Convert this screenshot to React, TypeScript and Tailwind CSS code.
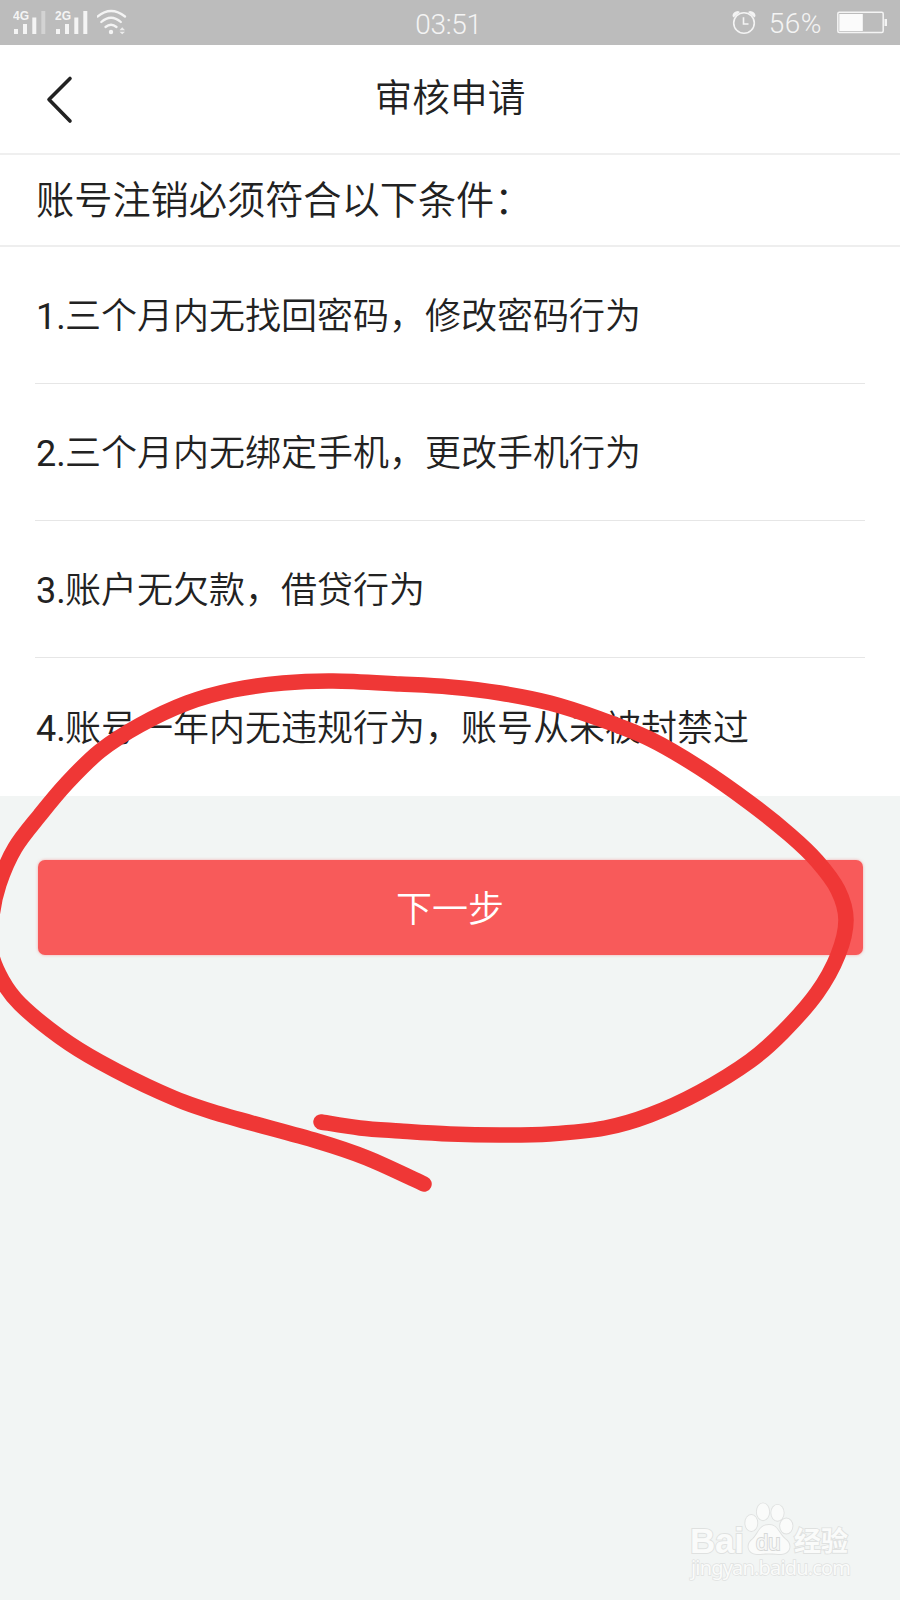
const conditions = [
  { n: "1.", text: "三个月内无找回密码，修改密码行为" },
  { n: "2.", text: "三个月内无绑定手机，更改手机行为" },
  { n: "3.", text: "账户无欠款，借贷行为" },
  { n: "4.", text: "账号一年内无违规行为，账号从未被封禁过" },
];

// Centre line of the hand-drawn marker stroke
const strokePoints: [number, number][] = [
  [321, 1122], [360, 1128], [400, 1131], [450, 1134], [500, 1135], [550, 1134], [605, 1128],
  [650, 1115], [700, 1092], [750, 1061], [783, 1032], [817, 993], [838, 955], [846, 920],
  [838, 890], [817, 861], [790, 835], [750, 803], [700, 768], [650, 739], [600, 719],
  [550, 703], [500, 693], [450, 687], [400, 684], [333, 681], [283, 683], [233, 690],
  [187, 703], [140, 725], [100, 751], [67, 783], [40, 815], [15, 848], [-1, 884],
  [-8, 916], [-9, 952], [2, 980], [20, 1004], [60, 1037], [100, 1062], [160, 1092], [213, 1112],
  [317, 1141], [367, 1158], [424, 1184],
];

function smoothPath(p: [number, number][]) {
  let d = `M${p[0][0]} ${p[0][1]}`;
  for (let i = 0; i < p.length - 1; i++) {
    const a = p[i - 1] ?? p[i];
    const b = p[i];
    const c = p[i + 1];
    const e = p[i + 2] ?? c;
    d += `C${b[0] + (c[0] - a[0]) / 6} ${b[1] + (c[1] - a[1]) / 6} ${c[0] - (e[0] - b[0]) / 6} ${c[1] - (e[1] - b[1]) / 6} ${c[0]} ${c[1]}`;
  }
  return d;
}

function Signal({ label, weak }: { label: string; weak?: boolean }) {
  return (
    <svg width="42" height="45" viewBox="0 0 42 45" fill="#f4f4f4">
      <text x="0" y="20" fontSize="12" fontWeight="700" fontFamily="Liberation Sans, sans-serif">{label}</text>
      <rect x="1" y="29" width="4" height="5" />
      <rect x="10" y="24" width="4" height="10" />
      <rect x="19.3" y="17.5" width="4" height="16.5" />
      <rect x="28.3" y="11" width="4" height="23" opacity={weak ? 0.4 : 1} />
    </svg>
  );
}

function Wifi() {
  return (
    <svg width="34" height="45" viewBox="0 0 34 45" fill="none" stroke="#f4f4f4" strokeWidth="2.3" strokeLinecap="round">
      <path d="M.500 16.500Q14 5.500 28 16.500" />
      <path d="M4.300 22Q14 13.500 23.800 22" />
      <path d="M8.500 27Q14 22.500 19.500 27" />
      <circle cx="14" cy="32" r="2.2" fill="#f4f4f4" stroke="none" />
      <path d="M22.500 30.300L25.200 27.200L28 30.300ZM22.500 31.700L25.200 34.300L28 31.700Z" fill="#ececec" stroke="none" />
    </svg>
  );
}

function AlarmClock() {
  return (
    <svg width="24" height="45" viewBox="0 0 24 45" fill="none" stroke="#f4f4f4" strokeWidth="1.6">
      <circle cx="12" cy="23" r="10.300" />
      <path d="M11.500 17.300V24H16.500" />
      <path d="M.500 16A6 5 0 0 1 6 11L8 12L1.500 17.500ZM23.500 16A6 5 0 0 0 18 11L16 12L22.500 17.500Z" fill="#f4f4f4" stroke="none" />
    </svg>
  );
}

function Battery() {
  return (
    <svg width="52" height="45" viewBox="0 0 52 45">
      <rect x="0.800" y="12.200" width="45.400" height="20.400" rx="1.500" fill="none" stroke="#f4f4f4" strokeWidth="1.5" />
      <rect x="2.300" y="14" width="23.500" height="17" fill="#fbfbfb" />
      <rect x="47.500" y="19" width="2.500" height="7" fill="#f4f4f4" />
    </svg>
  );
}

function Watermark() {
  return (
    <svg className="absolute left-[680px] top-[1495px]" width="180" height="90" viewBox="0 0 180 90" fill="#fafbfa" stroke="#dfe1e0" strokeWidth="1.8" paintOrder="stroke">
      <text x="10" y="57.500" fontSize="35" textLength="54" fontWeight="700" fontFamily="Liberation Sans, sans-serif">Bai</text>
      <ellipse cx="71.300" cy="28" rx="6" ry="8" />
      <ellipse cx="83" cy="16.800" rx="6.200" ry="8.500" />
      <ellipse cx="97.500" cy="17.800" rx="6.200" ry="8" />
      <ellipse cx="106.300" cy="31" rx="6.200" ry="7.500" />
      <path d="M89 30C79 30 79 38 73 44C66 49 67 58 77 59C82 59 84 58.500 89 58.500C94 58.500 97 59 101 59C111 58 112 49 105 44C98 38 98 30 89 30Z" />
      <text x="76" y="54.500" fontSize="22" fontWeight="400" fill="#f6f7f6" stroke="#d6d8d7" fontFamily="Liberation Sans, sans-serif">du</text>
      <text x="114" y="56" fontSize="27" fontWeight="700" fontFamily="Noto Sans CJK SC, sans-serif">经验</text>
      <text x="11" y="79.500" fontSize="20" textLength="160" strokeWidth="1.4" fontFamily="Noto Sans, sans-serif">jingyan.baidu.com</text>
    </svg>
  );
}

export default function App() {
  return (
    <div className="relative h-[1600px] w-[900px] overflow-hidden bg-[#f2f5f4] font-[Roboto,'Noto_Sans_CJK_SC',sans-serif] text-[#222]">
      {/* Status bar */}
      <div className="grid h-[45px] grid-cols-3 items-center bg-[#bcbcbc] text-[28px] font-[350] text-[#f4f4f4]">
        <div className="flex items-center pl-[13px]">
          <Signal label="4G" weak />
          <Signal label="2G" />
          <Wifi />
        </div>
        <div className="pt-[4px] text-center leading-none tracking-[-0.3px]">
          <span className="mr-[3px]">03:51</span>
        </div>
        <div className="flex items-center justify-end pr-[11px]">
          <AlarmClock />
          <span className="mr-[15px] ml-[13px] pt-[2px] leading-none tracking-[0.5px]">56%</span>
          <Battery />
        </div>
      </div>

      {/* Title bar */}
      <header className="grid h-[110px] grid-cols-[100px_1fr_100px] items-center border-b-2 border-[#efefef] bg-white">
        <button className="pl-[45px]" aria-label="返回">
          <svg width="28" height="50" viewBox="0 0 28 50" fill="none" stroke="#222" strokeWidth="3.6" strokeLinecap="round" strokeLinejoin="round">
            <path d="M25 4.500L4 25.500L25 47" />
          </svg>
        </button>
        <h1 className="text-center text-[37.7px] leading-none font-[350]">审核申请</h1>
      </header>

      <h2 className="flex h-[92px] items-center border-b-2 border-[#eee] bg-white pt-[3px] pl-[36px] text-[38.2px] leading-none font-[350]">
        账号注销必须符合以下条件：
      </h2>

      <ul className="h-[548.5px] bg-white px-[35px] text-[36px]">
        {conditions.map((c) => (
          <li key={c.n} className="flex h-1/4 items-center border-b border-[#e6e6e6] pt-[4px] leading-none last:border-b-0">
            <span className="ml-px w-[29px]">{c.n}</span>
            <span className="font-[350]">{c.text}</span>
          </li>
        ))}
      </ul>

      <div className="px-[37.5px] pt-[64.5px]">
        <button className="h-[95px] w-full rounded-[7px] bg-[#f85a5a] pt-[4px] text-[36px] leading-none font-[350] text-white shadow-[0_0_3px_#f95a5a80]">
          下一步
        </button>
      </div>

      <Watermark />

      <svg className="pointer-events-none absolute inset-0" width="900" height="1600" fill="none">
        <path d={smoothPath(strokePoints)} stroke="#ef3736" strokeWidth="15.5" strokeLinecap="round" />
      </svg>
    </div>
  );
}
